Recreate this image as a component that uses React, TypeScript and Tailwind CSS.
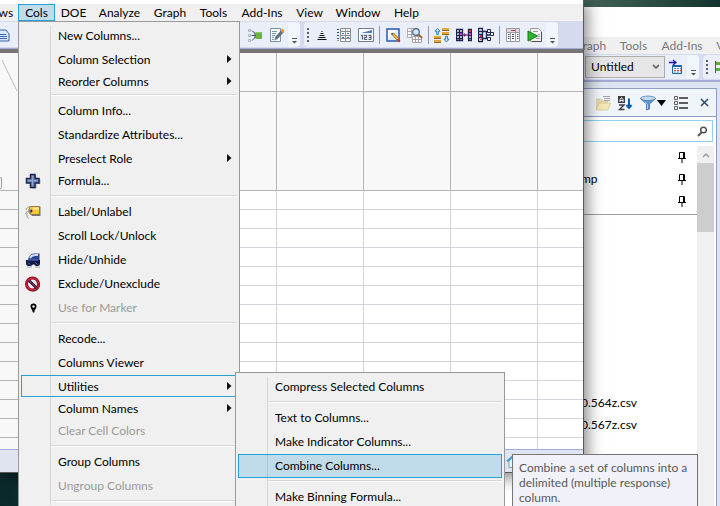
import type { ReactNode } from 'react'
import clsx from 'clsx'

type Item = { label: string; sub?: boolean; disabled?: boolean; active?: boolean; icon?: ReactNode }
type Entry = Item | 'sep'

const menuNames = [
  { label: 'Rows', width: 'w-[38px]' },
  { label: 'Cols', width: 'w-[37px]' },
  { label: 'DOE', width: 'w-[37px]' },
  { label: 'Analyze', width: 'w-[55px]' },
  { label: 'Graph', width: 'w-[46px]' },
  { label: 'Tools', width: 'w-[41px]' },
  { label: 'Add-Ins', width: 'w-[56px]' },
  { label: 'View', width: 'w-[39px]' },
  { label: 'Window', width: 'w-[58px]' },
  { label: 'Help', width: 'w-[39px]' },
]

/* ---------- icons ---------- */

function Icon({ children, size = 16 }: { children: ReactNode; size?: number }) {
  return (
    <svg width={size} height={size} viewBox="0 0 16 16" fill="none" className="shrink-0" aria-hidden="true">
      {children}
    </svg>
  )
}

const PlusIcon = () => (
  <Icon>
    <path d="M6.500 2.500h5v4h4v4.500h-4v4.500h-5V11h-4V6.500h4z" fill="#a9aeba" />
    <path d="M5.500 1.500h4.500v4h4V10h-4v4.500H5.500V10h-4V5.500h4z" fill="#6f86b8" stroke="#1d2850" strokeWidth="1.500" />
    <path d="M3 7.500h9.500M7.500 3v9.500" stroke="#8fa3cb" />
  </Icon>
)

const LabelIcon = () => (
  <Icon>
    <path d="M6 2.500h9.500V12H7L4.500 9.500V5z" fill="#77757c" />
    <path d="M5.500 2.500h9v8H6.500L4 8.500V5z" fill="#fbc832" stroke="#8f7a45" />
    <path d="M8 4.500h6" stroke="#ffe79a" strokeWidth="2" />
    <circle cx="6" cy="7" r="1.500" fill="#1c2d63" />
    <path d="M6 7C3 6.500 1 8 .5 10M2 9.500c-.5 2 0 3.500 1.500 5M5 2.500C3 3 1.500 4 1 6" stroke="#8e8d91" />
  </Icon>
)

const HideIcon = () => (
  <Icon>
    <path d="M3 7.500C4 4 6 2 9 1.500h5.500v11H3z" fill="#2b4490" />
    <path d="M5 6c1-2 3-3 5-3h3" stroke="#cfd9f7" strokeWidth="1.800" />
    <path d="M1 8h14v3.500c0 3.300-5 3.500-6 .5H8c-1 3-7 2.800-7-.5z" fill="#141b42" />
    <path d="M3 10.500l2 2M10.500 10.500l2 2M3 8h10" stroke="#5773c9" />
    <path d="M2 15h5M10 15h5" stroke="#a3a7b5" />
  </Icon>
)

const ExcludeIcon = () => (
  <Icon>
    <circle cx="8.500" cy="9" r="6.500" fill="#51566c" />
    <circle cx="7.500" cy="8" r="6" fill="#eceef3" stroke="#7c0d22" strokeWidth="3" />
    <circle cx="7.500" cy="8" r="6" stroke="#d21d35" strokeWidth="1.500" />
    <path d="M4 4.500l7.500 7.500" stroke="#22284c" strokeWidth="3" />
    <path d="M4 4.500l7.500 7.500" stroke="#cf2036" strokeWidth="1" />
  </Icon>
)

const MarkerIcon = () => (
  <Icon>
    <path d="M8.500 3.500c2 0 3 1.300 3 3 0 2-2 3-2.300 6H7.800C7.500 9.500 5.500 8.500 5.500 6.500c0-1.700 1-3 3-3z" fill="#000" />
    <circle cx="8.500" cy="6.500" r="1.200" fill="#f0f0f0" />
  </Icon>
)

const DocIcon = () => (
  <Icon>
    <path d="M2 3h9l3 4v7H2z" fill="#dbe8fb" stroke="#3a66ad" />
    <path d="M4 7.500h7M4 9.500h8M4 11.500h8" stroke="#3a66ad" />
  </Icon>
)

const FolderIcon = () => (
  <Icon>
    <path d="M1.500 1.500h4v11h-4z" fill="#f0b429" stroke="#b67c10" />
    <path d="M4 5h10v8H4z" fill="#ffd76b" />
  </Icon>
)

const JoinIcon = () => (
  <Icon>
    <path d="M1.500 2.500h2v2h-2zM1.500 7.500h2v2h-2zM1.500 12.500h2v2h-2z" stroke="#a9b4c6" />
    <path d="M5 3.500l4 4M4.500 8.500H9M5 13.500l4-4" stroke="#3e5878" />
    <path d="M8 5.500v6" stroke="#3e5878" />
    <path d="M9 5h6v7H9z" fill="#6db33c" />
    <path d="M9.500 5.500h5" stroke="#8ccb5d" />
  </Icon>
)

const NotePencilIcon = () => (
  <Icon>
    <path d="M1.500 1.500h10v13h-10z" fill="#f8fafc" stroke="#7793ad" />
    <path d="M3 4.500h5M3 6.500h4M3 8.500h3M3 10.500h2M3 12.500h2" stroke="#7793ad" />
    <path d="M5.500 13.500l1-4 6-6.500 2.500 2-6.500 7z" fill="#66707a" />
    <path d="M12 3.500l1-1.500 2 1.500-1 1.800z" fill="#ef9a35" stroke="#ef9a35" />
  </Icon>
)

const SortIcon = () => (
  <Icon>
    <path d="M7.500 4.500h1M6.500 6.500h3M5.500 8.500h5M4.500 10.500h7M3.500 12.500h9" stroke="#111" />
  </Icon>
)

const GridIcon = () => (
  <Icon>
    <path d="M1 2.500h2M1 5.500h2M1 8.500h2M1 11.500h2M1.500 13.500h1" stroke="#2c4f77" />
    <path d="M4.500 1.500h10v13h-10zM9.500 1.500v13M4.500 4.500h10M4.500 8.500h10M4.500 11.500h10" stroke="#8b8b90" fill="#fff" />
    <path d="M6 6.500h2M11 6.500h2M6 10.500h2M11 10.500h2" stroke="#2a7cb5" />
    <path d="M6 3h2M11 3h2" stroke="#d4d4d8" />
  </Icon>
)

const NumbersIcon = () => (
  <Icon>
    <path d="M.5 1.500h15v13H.5z" fill="#fff" stroke="#6f7f99" />
    <path d="M14 3v3H3z" fill="#4d79d8" />
    <path d="M2 7h12v6H2z" fill="#dfe5ef" />
    <path d="M3 8.500h1.500v4M6 8.500h2.500v2H6.500v2H9M10.500 8.500h2.500v4h-2.500M11 10.500h2" stroke="#3a4a63" strokeWidth=".9" />
  </Icon>
)

const EditIcon = () => (
  <Icon>
    <path d="M2 2h12v12H2z" fill="#dceafb" stroke="#2a5db0" strokeWidth="1.500" />
    <path d="M3 3h9L3 12z" fill="#fff" />
    <path d="M6.500 7l5.500 6 2-1.500L8.500 6z" fill="#f2b632" stroke="#8a5a13" strokeWidth=".7" />
    <path d="M12 13l2-1.500 1.500 2.500-1.500 1.500z" fill="#d33227" />
    <path d="M6 6.500l2.500-.5L7 8z" fill="#333" />
  </Icon>
)

const GridSearchIcon = () => (
  <Icon>
    <path d="M.5 1.500h10v9H.5zM4.500 1.500v9M.5 4.500h10M.5 7.500h10" fill="#fff" stroke="#b3adad" />
    <path d="M5.500 9.500h9v6h-9zM8.500 9.500v6M11.500 9.500v6M5.500 12.500h9" fill="#fff" stroke="#a59f9f" />
    <circle cx="9" cy="5" r="3.300" fill="#cfe7f6" stroke="#476584" strokeWidth="1.200" />
    <path d="M11.500 7.500l3.500 3.500" stroke="#a7662a" strokeWidth="2" />
  </Icon>
)

const StackIcon = () => (
  <Icon>
    <path d="M3.500 1.500L1 4.200h1.700v3.300h1.600V4.200H6z" fill="#fff" stroke="#1f7ab5" />
    <path d="M12.500 15L15 12.200h-1.700V9h-1.600v3.200H10z" fill="#fff" stroke="#1f7ab5" />
    <path d="M8 1h7v2.500H8zM8 5h7v2.500H8zM0 9h7v2.500H0zM0 13h7v2.500H0z" fill="#e0a63a" />
    <path d="M8 3.500h7M8 7.500h7M0 11.500h7M0 15.500h7" stroke="#94671a" />
  </Icon>
)

const MergeIcon = () => (
  <Icon>
    <path d="M.5 2.500h6v11h-6zM3.500 2.500v11M.5 5.500h6M.5 8.500h6M.5 11.500h6" fill="#fff" stroke="#1d2350" strokeWidth="1.300" />
    <path d="M12.500 2.500h3v11h-3zM12.500 5.500h3M12.500 8.500h3M12.500 11.500h3" fill="#fff" stroke="#1d2350" strokeWidth="1.300" />
    <path d="M4 6h2v2H4zM13 6h2v2h-2z" fill="#e23bd6" />
    <path d="M13 3h2v2h-2z" fill="#d8344c" />
    <path d="M7 8h5" stroke="#1d2350" />
    <path d="M8 6l2.500 2L8 10z" fill="#7a2a8c" />
  </Icon>
)

const SplitIcon = () => (
  <Icon>
    <path d="M.5 1.500h4v13h-4zM.5 4.500h4M.5 7.500h4M.5 10.500h4" fill="#fff" stroke="#1d2350" strokeWidth="1.300" />
    <path d="M5 4.500h5M5 11.500h5M8.500 4.500v7M8.500 8h4" stroke="#1d2350" strokeWidth="1.300" />
    <path d="M9.500 2.500h3v3h-3zM12.500 5.500h3v3h-3zM9.500 10.500h3v3h-3z" fill="#fff" stroke="#1d2350" />
    <path d="M2 8h2v2H2zM2 12h2v1H2z" fill="#cf2a50" />
  </Icon>
)

const TableIcon = () => (
  <Icon>
    <path d="M1.500 1.500h13v13h-13z" fill="#fff" stroke="#9a9a9f" />
    <path d="M2 2h12v3H2z" fill="#d9d9dd" />
    <path d="M1.500 5.500h13M5.500 5.500v9M10.500 1.500v13" stroke="#9a9a9f" />
    <path d="M3 7.500h1.500M3 9.500h1.500M3 11.500h1.500M7 7.500h2M7 9.500h2M7 11.500h2M12 7.500h1.500M12 9.500h1.500M12 11.500h1.500" stroke="#414a78" />
    <path d="M6 3.500h4" stroke="#c23b3b" />
  </Icon>
)

const RunIcon = () => (
  <Icon>
    <path d="M3.500 1.500h8l3 3v10h-11z" fill="#f4f4f4" stroke="#9b9b9b" />
    <path d="M6 4.500h5M11 7.500h2M11 9.500h2M9 11.500h4" stroke="#9b9b9b" />
    <path d="M14.500 5v9.500H5" stroke="#4b4b4b" />
    <path d="M1 4l9.500 5L1 14z" fill="#2fb52f" stroke="#127a19" />
  </Icon>
)

const ScriptTableIcon = () => (
  <Icon>
    <path d="M4.500 6.500h9v8h-9z" fill="#fff" stroke="#1767b3" />
    <path d="M4.500 7.500h9" stroke="#1767b3" />
    <path d="M6 9.500h7M6 13h7" stroke="#4b8ed0" strokeDasharray="2 1" />
    <path d="M6 11.500h7" stroke="#d23b4a" strokeDasharray="2 1" />
    <path d="M1 3.500h6M5 1l3 2.500L5 6" stroke="#1414b8" strokeWidth="1.300" />
  </Icon>
)

const OpenFolderIcon = () => (
  <Icon>
    <path d="M1 3.500h5l1 1.500h6v10H1z" fill="#e0d5ae" />
    <path d="M8 1.500h7M9 3.500h6M9 5.500h6" stroke="#a5a5a5" />
    <path d="M4 8h11.500L13 15H1z" fill="#f3e5b5" stroke="#d8c48a" strokeWidth=".7" />
  </Icon>
)

const AzIcon = () => (
  <Icon>
    <path d="M1 1h7v7H1z" fill="#3c3c3c" />
    <path d="M3 7V4.500L4.500 2.500 6 4.500V7M3 5.500h3" stroke="#fff" />
    <path d="M2 10h5L2.500 14.500H7.500" stroke="#3c3c3c" strokeWidth="1.400" />
    <path d="M12 3.500v9M9.500 10l2.500 3 2.500-3" stroke="#0a5fae" strokeWidth="2" />
  </Icon>
)

const FunnelIcon = () => (
  <Icon>
    <path d="M.5 3.500L6.500 9v6l3-1V9l6-5.500z" fill="#5b93cf" stroke="#3d6fa8" strokeWidth=".8" />
    <ellipse cx="8" cy="3.300" rx="7.300" ry="2.200" fill="#c5dcf2" stroke="#4f82ba" strokeWidth=".8" />
    <path d="M5 7l2.500 2.500V14" stroke="#b4d2ee" />
  </Icon>
)

const ListIcon = () => (
  <Icon>
    <path d="M1.500 1.500h3v3h-3zM1.500 6.500h3v3h-3zM1.500 11.500h3v3h-3z" stroke="#5d5d5d" />
    <path d="M6 3h9M6 8h9M6 13h9" stroke="#5d5d5d" strokeWidth="2" />
  </Icon>
)

const PinIcon = () => (
  <Icon>
    <path d="M5.500 3.500h5v6h-5z" stroke="#000" />
    <path d="M9.500 3.500v6M4 9.500h8M8 10v4" stroke="#000" />
  </Icon>
)

const HomeIcon = () => (
  <Icon>
    <path d="M3 8v6.500h10V8L8 3.500z" fill="#eef6fc" stroke="#6fa9cf" />
    <path d="M1 8.500l7-6.500 7 6.500" stroke="#3f9ed8" strokeWidth="2" />
    <path d="M7 10h3v4.500H7z" fill="#b08a3c" />
  </Icon>
)

const GreenBarsIcon = () => (
  <Icon>
    <path d="M1.500 2v12" stroke="#555" />
    <path d="M2 3h12v3H2zM2 9h12v3H2z" fill="#5fae3a" />
  </Icon>
)

/* ---------- window chrome ---------- */

function MenuBar({ open, dim }: { open?: string; dim?: boolean }) {
  return (
    <nav className={clsx('flex h-[17px] bg-[#f0f0f0]', dim ? 'text-[#777]' : 'text-black')}>
      {/* scrolled partly past the left edge */}
      <div className="-ml-5 flex">
        {menuNames.map((m) => (
          <button
            key={m.label}
            className={clsx(
              'flex h-[17px] shrink-0 items-center justify-center border leading-4 whitespace-nowrap',
              m.width,
              open === m.label ? 'border-[#26a0da] bg-[#c0dcea]' : 'border-transparent',
            )}
          >
            {m.label}
          </button>
        ))}
      </div>
    </nav>
  )
}

function Tool({ label, children }: { label: string; children: ReactNode }) {
  return (
    <button aria-label={label} className="flex h-6 w-[22px] shrink-0 items-center justify-center">
      {children}
    </button>
  )
}

const Divider = () => <div className="mx-[2px] h-[18px] w-px shrink-0 bg-[#8f96a8]" />

const Grip = () => (
  <div className="flex w-[7px] shrink-0 flex-col items-center gap-[2px] pl-px">
    {[0, 1, 2, 3].map((i) => (
      <span key={i} className="size-[2px] bg-[#5c6068]" />
    ))}
  </div>
)

const Overflow = () => (
  <button aria-label="More tools" className="flex h-6 w-3 shrink-0 items-end justify-center rounded-r bg-[#f1f5fc] pb-[3px]">
    <svg width="7" height="6" viewBox="0 0 7 6" aria-hidden="true">
      <path d="M1 0h5v1H1zM1 3h5L3.500 5.500z" fill="#555" />
    </svg>
  </button>
)

function Menu({ entries, className, label }: { entries: Entry[]; className: string; label: string }) {
  return (
    <div role="menu" aria-label={label} className={clsx('flex flex-col border border-[#999] bg-[#f0f0f0] p-[2px]', className)}>
      {entries.map((e, i) => {
        if (e === 'sep') {
          return (
            <div key={i} className="flex h-[7px] shrink-0">
              <div className="w-[30px] border-r border-[#d7d7d7]" />
              <div className="mt-[2px] h-[2px] flex-1 border-t border-b border-t-[#d7d7d7] border-b-white" />
            </div>
          )
        }
        return (
          <button
            key={i}
            role="menuitem"
            disabled={e.disabled}
            className={clsx(
              'relative flex shrink-0 items-stretch text-left',
              e.sub ? 'h-[22px]' : 'h-6',
              e.disabled ? 'text-[#9a9a9a]' : 'text-black',
              e.active && !e.sub && 'bg-[#c0dcea]',
              e.active && 'outline outline-1 -outline-offset-1 outline-[#26a0da]',
            )}
          >
            <span
              className={clsx(
                'flex w-[30px] items-center justify-center border-r pr-[6px]',
                e.active && !e.sub ? 'border-[#a9c6d6]' : 'border-[#d7d7d7]',
                i === 0 && 'mt-[2px]',
              )}
            >
              {e.icon}
            </span>
            <span className={clsx('flex flex-1 items-center pl-[7px] whitespace-nowrap', e.sub && 'pt-[2px]')}>{e.label}</span>
            {e.sub && (
              <svg width="5" height="8" viewBox="0 0 5 8" className="mr-[5px] self-center" aria-hidden="true">
                <path d="M0 0l4.500 4L0 8z" fill="#111" />
              </svg>
            )}
          </button>
        )
      })}
    </div>
  )
}

const colsMenu: Entry[] = [
  { label: 'New Columns...' },
  { label: 'Column Selection', sub: true },
  { label: 'Reorder Columns', sub: true },
  'sep',
  { label: 'Column Info...' },
  { label: 'Standardize Attributes...' },
  { label: 'Preselect Role', sub: true },
  { label: 'Formula...', icon: <PlusIcon /> },
  'sep',
  { label: 'Label/Unlabel', icon: <LabelIcon /> },
  { label: 'Scroll Lock/Unlock' },
  { label: 'Hide/Unhide', icon: <HideIcon /> },
  { label: 'Exclude/Unexclude', icon: <ExcludeIcon /> },
  { label: 'Use for Marker', disabled: true, icon: <MarkerIcon /> },
  'sep',
  { label: 'Recode...' },
  { label: 'Columns Viewer' },
  { label: 'Utilities', sub: true, active: true },
  { label: 'Column Names', sub: true },
  { label: 'Clear Cell Colors', disabled: true },
  'sep',
  { label: 'Group Columns' },
  { label: 'Ungroup Columns', disabled: true },
  'sep',
]

const utilitiesMenu: Entry[] = [
  { label: 'Compress Selected Columns' },
  'sep',
  { label: 'Text to Columns...' },
  { label: 'Make Indicator Columns...' },
  { label: 'Combine Columns...', active: true },
  'sep',
  { label: 'Make Binning Formula...' },
]

const columns = [1, 2, 3, 4, 5, 6]
const rows = Array.from({ length: 14 }, (_, i) => i)

function DataTable() {
  return (
    <div className="h-[396px] overflow-hidden bg-white">
      <table className="w-[625px] table-fixed border-separate border-spacing-0">
        <thead>
          <tr className="h-[39px] bg-[#f8f8f8]">
            <th className="w-[103px] border-r border-[#b4b4b4] p-0 align-top">
              <svg width="40" height="38" viewBox="0 0 40 38" aria-hidden="true">
                <path d="M2 7l15 31" stroke="#bdbdbd" />
              </svg>
            </th>
            {columns.map((c) => (
              <th key={c} className="w-[87px] border-r border-b border-[#b4b4b4] p-0" />
            ))}
          </tr>
          <tr className="h-[99px] bg-[#f8f8f8]">
            <th className="border-r border-b border-[#b4b4b4] p-0 align-bottom">
              <div className="mb-px h-3 w-[2px] rounded-r border border-l-0 border-[#999]" />
            </th>
            {columns.map((c) => (
              <th key={c} className="border-r border-b border-[#b4b4b4] p-0" />
            ))}
          </tr>
        </thead>
        <tbody>
          {rows.map((r) => (
            <tr key={r} className="h-[19px]">
              <th className="border-r border-b border-[#b4b4b4] bg-[#f8f8f8] p-0" />
              {columns.map((c) => (
                <td key={c} className="border-r border-b border-[#d5d4dc] p-0" />
              ))}
            </tr>
          ))}
        </tbody>
      </table>
    </div>
  )
}

function HomeWindow() {
  return (
    <section className="absolute top-[7px] right-0 bottom-0 left-[420px] flex flex-col overflow-hidden bg-[#dce4ef]">
      <div className="h-[30px] shrink-0 bg-white" />
      <MenuBar dim />
      <div className="flex h-7 shrink-0 items-center border-b-2 border-[#a3acd0] bg-[#d5daee]">
        <div className="flex h-6 items-center rounded-r bg-[#e9eef8] pl-[165px]">
          <div className="relative flex items-center">
            <select
              aria-label="Script window"
              className="h-[22px] w-20 appearance-none border border-[#adadad] bg-[#e6e6e6] pl-[5px] text-black"
            >
              <option>Untitled</option>
            </select>
            <svg width="8" height="6" viewBox="0 0 8 6" className="pointer-events-none absolute right-[5px]" aria-hidden="true">
              <path d="M1 1l3 3 3-3" fill="none" stroke="#555" strokeWidth="1.500" />
            </svg>
          </div>
          <Tool label="Run script on table"><ScriptTableIcon /></Tool>
          <Overflow />
        </div>
        <div className="ml-1 flex h-6 flex-1 items-center overflow-hidden rounded-l bg-[#e9eef8]">
          <Grip />
          <div className="ml-1"><GreenBarsIcon /></div>
        </div>
      </div>

      <div className="mt-[6px] mr-[3px] flex flex-1 flex-col border-t border-r border-[#8f9dc2] bg-white">
        <div className="flex h-7 shrink-0 items-center justify-end border-b border-[#8f9dc2] bg-[#f0f4fb] pr-1">
          <Tool label="Open"><OpenFolderIcon /></Tool>
          <Tool label="Sort by name"><AzIcon /></Tool>
          <button aria-label="Filter" className="ml-1 flex h-6 w-[30px] items-center">
            <FunnelIcon />
            <svg width="9" height="6" viewBox="0 0 9 6" className="ml-px" aria-hidden="true">
              <path d="M0 0h9L4.500 6z" fill="#000" />
            </svg>
          </button>
          <Tool label="List view"><ListIcon /></Tool>
          <button aria-label="Close" className="ml-1 flex h-6 w-4 items-center justify-center">
            <svg width="9" height="9" viewBox="0 0 9 9" aria-hidden="true">
              <path d="M1 1l7 7M8 1L1 8" stroke="#2d4a72" strokeWidth="1.500" />
            </svg>
          </button>
        </div>

        <div className="mt-[3px] mr-[3px] flex h-[22px] shrink-0 items-center border border-[#8fd3f0] bg-white pr-1">
          <input aria-label="Search files" className="min-w-0 flex-1 bg-transparent outline-none" />
          <svg width="11" height="11" viewBox="0 0 11 11" fill="none" aria-hidden="true">
            <circle cx="6.500" cy="4" r="2.800" stroke="#555" strokeWidth="1.500" />
            <path d="M4.500 6.500L1 10" stroke="#555" strokeWidth="2" />
          </svg>
        </div>

        <div className="mt-1 mr-[2px] flex flex-1">
          <div className="min-w-0 flex-1">
            <ul className="border-b border-[#a0a0a0] pb-[2px] text-black">
              {['', 'mp', ''].map((name, i) => (
                <li key={i} className="flex h-[22px] items-center justify-between pr-[7px] pl-[161px]">
                  <span>{name}</span>
                  <PinIcon />
                </li>
              ))}
            </ul>
            <ul className="pt-[177px]">
              {['0.564z.csv', '0.567z.csv'].map((name) => (
                <li key={name} className="flex h-[22px] items-center pl-[161px] text-black">
                  {name}
                </li>
              ))}
            </ul>
          </div>
          <div className="w-[17px] bg-[#f0f0f0]">
            <button aria-label="Scroll up" className="flex h-[17px] w-full items-center justify-center">
              <svg width="8" height="6" viewBox="0 0 8 6" fill="none" aria-hidden="true">
                <path d="M1 5l3-3 3 3" stroke="#9a9a9a" strokeWidth="1.500" />
              </svg>
            </button>
            <div className="h-[69px] bg-[#cdcdcd]" />
          </div>
        </div>
      </div>
    </section>
  )
}

function TableWindow() {
  return (
    <section className="absolute top-0 right-[136px] left-0 flex flex-col overflow-hidden border-r border-b border-[#5a5a5a] bg-white shadow-[2px_3px_16px_rgba(0,0,0,0.55)]">
      <div className="h-1 bg-white" />
      <MenuBar open="Cols" />
      <div className="flex h-7 items-center border-b border-[#a3acd0] bg-[#d5daee]">
        <div className="flex h-[25px] w-[300px] items-center rounded-r bg-[#e9eef8]">
          <div className="-ml-2 flex">
            <Tool label="New script"><DocIcon /></Tool>
            <Tool label="Open"><FolderIcon /></Tool>
          </div>
          <div className="flex-1" />
          <Tool label="Join"><JoinIcon /></Tool>
          <Tool label="Edit notes"><NotePencilIcon /></Tool>
          <Overflow />
        </div>
        <div className="ml-1 flex h-[25px] items-center rounded bg-[#e9eef8]">
          <Grip />
          <Tool label="Sort"><SortIcon /></Tool>
          <Tool label="Data grid"><GridIcon /></Tool>
          <Tool label="Column format"><NumbersIcon /></Tool>
          <Divider />
          <Tool label="Edit"><EditIcon /></Tool>
          <Tool label="Find in table"><GridSearchIcon /></Tool>
          <Divider />
          <Tool label="Stack"><StackIcon /></Tool>
          <Tool label="Merge"><MergeIcon /></Tool>
          <Tool label="Split"><SplitIcon /></Tool>
          <Divider />
          <Tool label="Summary table"><TableIcon /></Tool>
          <Tool label="Run script"><RunIcon /></Tool>
          <Overflow />
        </div>
      </div>
      <div className="h-1 bg-[#757575]" />
      <DataTable />
      <footer className="flex h-[23px] items-center justify-end border-t border-[#a3acd0] bg-[#dfe5f0] pr-[61px]">
        <HomeIcon />
      </footer>
    </section>
  )
}

export default function App() {
  return (
    <main className="relative min-h-screen overflow-hidden bg-linear-to-r from-[#0b2a2b] via-[#47675a] via-80% to-[#14332e] font-['Lato','Open_Sans',sans-serif] text-xs">
      <HomeWindow />
      <TableWindow />
      <Menu label="Cols" entries={colsMenu} className="absolute top-[21px] left-[18px] w-[222px]" />
      <Menu label="Utilities" entries={utilitiesMenu} className="absolute top-[372px] left-[235px] w-[270px]" />
      <div
        role="tooltip"
        className="absolute top-[454px] left-[512px] w-[186px] border border-[#767676] bg-[#f1f2f9] px-[6px] py-[5px] leading-[15px] text-[#575757]"
      >
        Combine a set of columns into a delimited (multiple response) column.
      </div>
    </main>
  )
}
